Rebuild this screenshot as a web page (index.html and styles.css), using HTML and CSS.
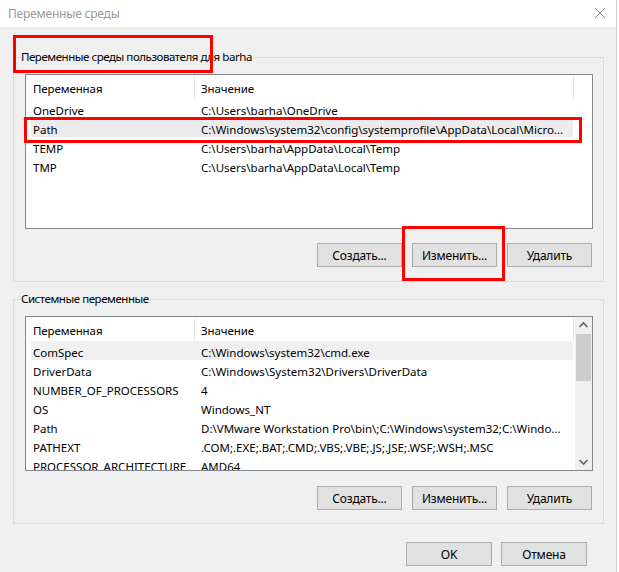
FILE: index.html
```html
<!DOCTYPE html>
<html lang="ru">
<head>
<meta charset="utf-8">
<title>Переменные среды</title>
<link rel="stylesheet" href="styles.css">
</head>
<body>
<div class="window">
  <div class="titlebar">
    <span class="title">Переменные среды</span>
    <svg class="close" width="12" height="12" viewBox="0 0 12 12"><path d="M1 1 L11 11 M11 1 L1 11" stroke="#8a8a8a" stroke-width="1" fill="none"/></svg>
  </div>
  <div class="body">
    <fieldset class="group">
      <legend>Переменные среды пользователя для barha</legend>
      <div class="list">
        <div class="header">
          <div class="hcol c1">Переменная</div>
          <div class="hcol c2">Значение</div>
        </div>
        <div class="row"><span class="c1">OneDrive</span><span class="c2">C:\Users\barha\OneDrive</span></div>
        <div class="row sel"><span class="c1">Path</span><span class="c2">C:\Windows\system32\config\systemprofile\AppData\Local\Micro...</span></div>
        <div class="row"><span class="c1">TEMP</span><span class="c2">C:\Users\barha\AppData\Local\Temp</span></div>
        <div class="row"><span class="c1">TMP</span><span class="c2">C:\Users\barha\AppData\Local\Temp</span></div>
      </div>
      <div class="buttons">
        <button class="btn">Создать...</button>
        <button class="btn">Изменить...</button>
        <button class="btn">Удалить</button>
      </div>
    </fieldset>
    <fieldset class="group group2">
      <legend>Системные переменные</legend>
      <div class="list scroll">
        <div class="list-main">
          <div class="header">
            <div class="hcol c1">Переменная</div>
            <div class="hcol c2">Значение</div>
          </div>
          <div class="row sel2"><span class="c1">ComSpec</span><span class="c2">C:\Windows\system32\cmd.exe</span></div>
          <div class="row"><span class="c1">DriverData</span><span class="c2">C:\Windows\System32\Drivers\DriverData</span></div>
          <div class="row"><span class="c1">NUMBER_OF_PROCESSORS</span><span class="c2">4</span></div>
          <div class="row"><span class="c1">OS</span><span class="c2">Windows_NT</span></div>
          <div class="row"><span class="c1">Path</span><span class="c2">D:\VMware Workstation Pro\bin\;C:\Windows\system32;C:\Windo...</span></div>
          <div class="row"><span class="c1">PATHEXT</span><span class="c2">.COM;.EXE;.BAT;.CMD;.VBS;.VBE;.JS;.JSE;.WSF;.WSH;.MSC</span></div>
          <div class="row"><span class="c1">PROCESSOR_ARCHITECTURE</span><span class="c2">AMD64</span></div>
        </div>
        <div class="scrollbar">
          <svg class="arrow" width="17" height="17" viewBox="0 0 17 17"><path d="M4.5 10 L8.5 6 L12.5 10" stroke="#606060" stroke-width="1.6" fill="none"/></svg>
          <div class="track"><div class="thumb"></div></div>
          <svg class="arrow" width="17" height="17" viewBox="0 0 17 17"><path d="M4.5 7 L8.5 11 L12.5 7" stroke="#606060" stroke-width="1.6" fill="none"/></svg>
        </div>
      </div>
      <div class="buttons buttons2">
        <button class="btn">Создать...</button>
        <button class="btn">Изменить...</button>
        <button class="btn">Удалить</button>
      </div>
    </fieldset>
    <div class="footer">
      <button class="btn btn-wide">OK</button>
      <button class="btn btn-wide">Отмена</button>
    </div>
  </div>
  <div class="mark mark-legend"></div>
  <div class="mark mark-row"></div>
  <div class="mark mark-btn"></div>
</div>
</body>
</html>
```

FILE: styles.css
```css
html, body {
  margin: 0;
  padding: 0;
  background: #ffffff;
}
body {
  font-family: "Noto Sans", "Liberation Sans", sans-serif;
  font-size: 11.5px;
  color: #000;
}
.window {
  position: relative;
  width: 616px;
  height: 572px;
  border-right: 1px solid #cfcfcf;
  background: #f0f0f0;
  overflow: hidden;
}
.titlebar {
  height: 27px;
  background: #ffffff;
  display: flex;
  align-items: center;
  justify-content: space-between;
  padding: 0 10px 2px 8px;
  box-sizing: border-box;
}
.title {
  color: #9a9a9a;
  font-size: 12px;
  letter-spacing: -0.2px;
  padding-top: 1px;
}
.body {
  padding: 22px 0 0 13px;
  width: 591px;
}
.group {
  margin: 0;
  padding: 9px 10px 14px 11px;
  border: 1px solid #dcdcdc;
  min-width: 0;
}
.group legend {
  padding: 0 1px;
  margin-left: -5px;
  line-height: 16px;
  letter-spacing: -0.45px;
}
.group2 {
  margin-top: 9px;
  padding-top: 9px;
  padding-bottom: 13px;
}
.list {
  height: 153px;
  border: 1px solid #828790;
  background: #fff;
  overflow: hidden;
}
.list.scroll {
  display: flex;
}
.list-main {
  flex: 1;
  min-width: 0;
}
.header {
  display: flex;
  height: 24px;
  align-items: center;
}
.hcol {
  height: 24px;
  display: flex;
  align-items: center;
  box-sizing: border-box;
  white-space: nowrap;
  padding-top: 2px;
  letter-spacing: -0.1px;
}
.header .c1 {
  width: 169px;
  padding-left: 7px;
  border-right: 1px solid #e5e5e5;
}
.header .c2 {
  width: 379px;
  padding-left: 6px;
  border-right: 1px solid #e5e5e5;
}
.row {
  display: flex;
  height: 19px;
  align-items: center;
  margin-left: 5px;
  width: 542px;
  white-space: nowrap;
  box-sizing: border-box;
  padding-top: 3px;
}
.row .c1 {
  width: 164px;
  padding-left: 2px;
  box-sizing: border-box;
  overflow: hidden;
}
.row .c2 {
  flex: 1;
  padding-left: 6px;
  overflow: hidden;
}
.row.sel {
  background: #ececec;
}
.row.sel2 {
  background: #f0f0f0;
}
.scrollbar {
  width: 17px;
  display: flex;
  flex-direction: column;
  background: #f0f0f0;
}
.arrow {
  display: block;
}
.track {
  flex: 1;
}
.thumb {
  height: 47px;
  margin: 0 1px;
  background: #cdcdcd;
}
.buttons {
  display: flex;
  justify-content: flex-end;
  gap: 10px;
  margin-top: 14px;
  padding-right: 1px;
}
.buttons2 {
  margin-top: 15px;
}
.btn {
  width: 85px;
  height: 24px;
  border: 1px solid #adadad;
  background: #e1e1e1;
  font-family: inherit;
  font-size: 12px;
  letter-spacing: -0.2px;
  color: #000;
  padding: 0;
  margin: 0;
}
.footer {
  display: flex;
  justify-content: flex-end;
  gap: 9px;
  margin-top: 18px;
  padding-right: 17px;
}
.btn-wide {
  width: 86px;
  height: 24px;
}
.mark {
  position: absolute;
  border: 3px solid #ff0000;
  box-sizing: border-box;
}
.mark-legend {
  left: 13px;
  top: 35px;
  width: 200px;
  height: 38px;
}
.mark-row {
  left: 24px;
  top: 117px;
  width: 558px;
  height: 26px;
}
.mark-btn {
  left: 402px;
  top: 226px;
  width: 103px;
  height: 55px;
}
```
